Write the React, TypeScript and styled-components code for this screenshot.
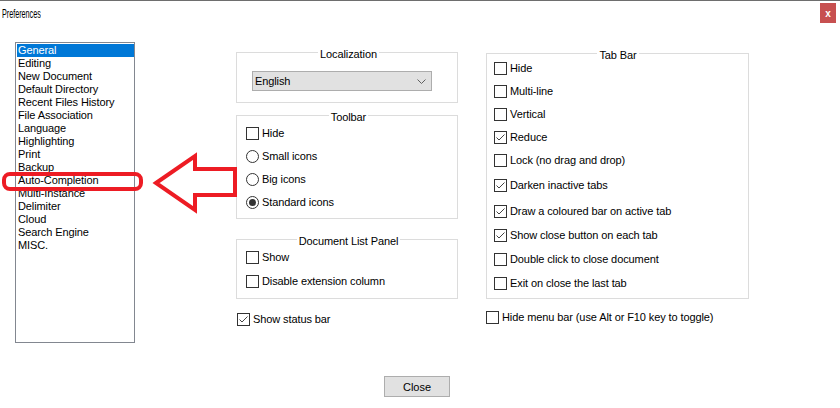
import React from 'react';
import styled, { createGlobalStyle } from 'styled-components';

const GlobalStyle = createGlobalStyle`
  html, body { margin: 0; padding: 0; background: #ffffff; }
  body {
    font-family: "Liberation Sans", Arial, sans-serif;
    font-size: 11px;
    letter-spacing: -0.1px;
    color: #000000;
  }
  * { box-sizing: border-box; }
`;

const Window = styled.div`
  position: relative;
  width: 840px;
  height: 408px;
  overflow: hidden;
  background: #ffffff;
`;

const TopRule = styled.div`
  height: 1px;
  background: #6e6e6e;
`;

const TitleBar = styled.div`
  display: flex;
  align-items: flex-start;
  justify-content: space-between;
  height: 24px;
  padding: 0 4px 0 2px;
`;

const Title = styled.span`
  display: inline-block;
  margin-top: 6px;
  font-size: 12px;
  line-height: 14px;
  letter-spacing: 0;
  white-space: nowrap;
  transform: scaleX(0.6);
  transform-origin: left center;
`;

const CloseX = styled.div`
  margin-top: 2px;
  width: 16px;
  height: 20px;
  background: #c75050;
  color: #ffffff;
  font-weight: bold;
  font-size: 10px;
  display: flex;
  align-items: center;
  justify-content: center;
`;

const Content = styled.div`
  display: flex;
  align-items: flex-start;
  margin-top: 17px;
  padding-left: 15px;
`;

const ListBox = styled.ul`
  margin: 0;
  width: 120px;
  height: 301px;
  border: 1px solid #828790;
  padding: 1px 0 0 1px;
  list-style: none;
  background: #ffffff;
`;

const ListItem = styled.li<{ $selected?: boolean }>`
  height: 13px;
  line-height: 13px;
  padding-left: 1px;
  white-space: nowrap;
  background: ${(p) => (p.$selected ? '#0078d7' : 'transparent')};
  color: ${(p) => (p.$selected ? '#ffffff' : '#000000')};
`;

const Column = styled.div<{ $left: number; $width: number; $top: number }>`
  display: flex;
  flex-direction: column;
  margin-left: ${(p) => p.$left}px;
  width: ${(p) => p.$width}px;
  padding-top: ${(p) => p.$top}px;
`;

const GroupBox = styled.fieldset<{ $h: number; $gap?: number; $pl: number }>`
  margin: ${(p) => p.$gap ?? 0}px 0 0 0;
  padding: 0 6px 0 ${(p) => p.$pl}px;
  border: 1px solid #dcdcdc;
  height: ${(p) => p.$h}px;
  min-width: 0;
`;

const Legend = styled.legend`
  margin: 0 auto;
  padding: 3px 2px 0;
  line-height: 12px;
  font-size: 11px;
  white-space: nowrap;
`;

const Rows = styled.div<{ $mt: number }>`
  display: flex;
  flex-direction: column;
  margin-top: ${(p) => p.$mt}px;
`;

const Row = styled.label<{ $h?: number; $mt?: number; $ml?: number }>`
  display: flex;
  align-items: center;
  gap: 3px;
  height: ${(p) => p.$h ?? 23}px;
  margin-top: ${(p) => p.$mt ?? 0}px;
  margin-left: ${(p) => p.$ml ?? 0}px;
  white-space: nowrap;
  line-height: 13px;
`;

const Box = styled.span`
  flex: none;
  width: 13px;
  height: 13px;
  border: 1px solid #333333;
  background: #ffffff;
  display: flex;
  align-items: center;
  justify-content: center;
`;

const Radio = styled.span<{ $on?: boolean }>`
  flex: none;
  width: 13px;
  height: 13px;
  border: 1px solid #333333;
  border-radius: 50%;
  background: #ffffff;
  display: flex;
  align-items: center;
  justify-content: center;
  &::after {
    content: '';
    display: ${(p) => (p.$on ? 'block' : 'none')};
    width: 7px;
    height: 7px;
    border-radius: 50%;
    background: #333333;
  }
`;

const Combo = styled.div`
  width: 180px;
  height: 20px;
  margin: 11px 0 0 6px;
  border: 1px solid #adadad;
  background: #e1e1e1;
  display: flex;
  align-items: center;
  justify-content: space-between;
  padding: 0 5px 0 2px;
  line-height: 13px;
`;

const Footer = styled.div`
  display: flex;
  justify-content: center;
  padding-right: 6px;
  margin-top: 33px;
`;

const Button = styled.button`
  width: 66px;
  height: 21px;
  border: 1px solid #adadad;
  background: #e1e1e1;
  font-family: "Liberation Sans", Arial, sans-serif;
  font-size: 11px;
  color: #000000;
  padding: 0;
`;

const Overlay = styled.svg`
  position: absolute;
  left: 0;
  top: 0;
  pointer-events: none;
`;

const CheckBox: React.FC<{ checked?: boolean; label: string; h?: number; mt?: number; ml?: number }> = ({
  checked,
  label,
  h,
  mt,
  ml,
}) => (
  <Row $h={h} $mt={mt} $ml={ml}>
    <Box>
      {checked && (
        <svg width="11" height="11" viewBox="0 0 11 11">
          <polyline points="1.5,5.5 4,8 9.5,2.5" fill="none" stroke="#444" strokeWidth="1" />
        </svg>
      )}
    </Box>
    <span>{label}</span>
  </Row>
);

const RadioItem: React.FC<{ on?: boolean; label: string }> = ({ on, label }) => (
  <Row>
    <Radio $on={on} />
    <span>{label}</span>
  </Row>
);

const items = [
  'General',
  'Editing',
  'New Document',
  'Default Directory',
  'Recent Files History',
  'File Association',
  'Language',
  'Highlighting',
  'Print',
  'Backup',
  'Auto-Completion',
  'Multi-Instance',
  'Delimiter',
  'Cloud',
  'Search Engine',
  'MISC.',
];

const tabItems: { label: string; checked?: boolean; h: number }[] = [
  { label: 'Hide', h: 23 },
  { label: 'Multi-line', h: 23 },
  { label: 'Vertical', h: 23 },
  { label: 'Reduce', checked: true, h: 23 },
  { label: 'Lock (no drag and drop)', h: 23 },
  { label: 'Darken inactive tabs', checked: true, h: 27 },
  { label: 'Draw a coloured bar on active tab', checked: true, h: 24 },
  { label: 'Show close button on each tab', checked: true, h: 24 },
  { label: 'Double click to close document', h: 24 },
  { label: 'Exit on close the last tab', h: 25 },
];

export default function App() {
  return (
    <>
      <GlobalStyle />
      <Window>
        <TopRule />
        <TitleBar>
          <Title>Preferences</Title>
          <CloseX>x</CloseX>
        </TitleBar>
        <Content>
          <ListBox>
            {items.map((it, i) => (
              <ListItem key={it} $selected={i === 0}>
                {it}
              </ListItem>
            ))}
          </ListBox>
          <Column $left={101} $width={222} $top={3}>
            <GroupBox $h={58} $pl={9}>
              <Legend>Localization</Legend>
              <Combo>
                <span>English</span>
                <svg width="9" height="5" viewBox="0 0 9 5">
                  <polyline points="0.5,0.5 4.5,4.5 8.5,0.5" fill="none" stroke="#606060" strokeWidth="1" />
                </svg>
              </Combo>
            </GroupBox>
            <GroupBox $h={111} $gap={5} $pl={9}>
              <Legend>Toolbar</Legend>
              <Rows $mt={-1}>
                <CheckBox label="Hide" />
                <RadioItem label="Small icons" />
                <RadioItem label="Big icons" />
                <RadioItem on label="Standard icons" />
              </Rows>
            </GroupBox>
            <GroupBox $h={67} $gap={13} $pl={9}>
              <Legend>Document List Panel</Legend>
              <Rows $mt={-2}>
                <CheckBox label="Show" h={24} />
                <CheckBox label="Disable extension column" h={24} />
              </Rows>
            </GroupBox>
            <CheckBox checked label="Show status bar" h={24} mt={8} ml={1} />
          </Column>
          <Column $left={28} $width={263} $top={4}>
            <GroupBox $h={253} $pl={7}>
              <Legend>Tab Bar</Legend>
              <Rows $mt={-4}>
                {tabItems.map((t) => (
                  <CheckBox key={t.label} label={t.label} checked={t.checked} h={t.h} />
                ))}
              </Rows>
            </GroupBox>
            <CheckBox label="Hide menu bar (use Alt or F10 key to toggle)" h={24} mt={6} />
          </Column>
        </Content>
        <Footer>
          <Button>Close</Button>
        </Footer>
        <Overlay width="840" height="408" viewBox="0 0 840 408">
          <rect x="4" y="174" width="137" height="15" rx="6" ry="6" fill="none" stroke="#ed1c24" strokeWidth="4" />
          <polygon
            points="156,183 195,156 195,169 235,169 235,195 195,195 195,210"
            fill="none"
            stroke="#ed1c24"
            strokeWidth="4"
            strokeLinejoin="miter"
          />
        </Overlay>
      </Window>
    </>
  );
}
